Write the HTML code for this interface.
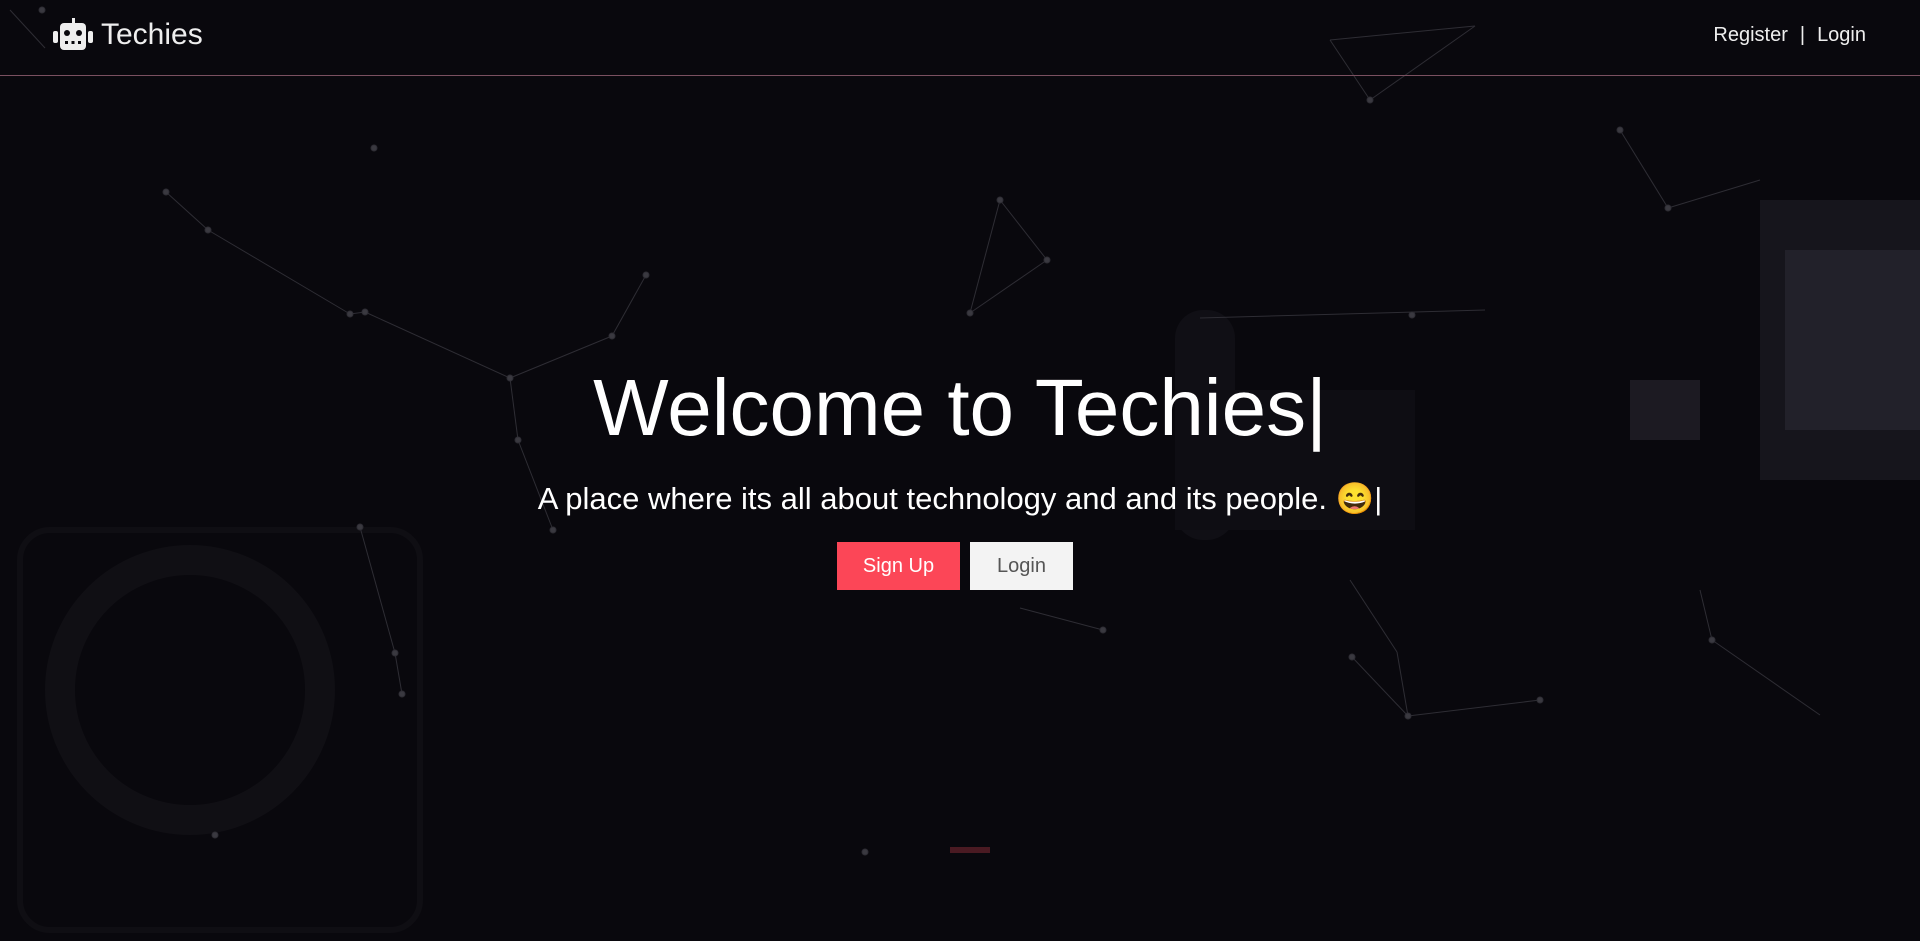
<!DOCTYPE html>
<html><head><meta charset="utf-8"><style>
html,body{margin:0;padding:0;width:1920px;height:941px;overflow:hidden;background:#09080d;font-family:"Liberation Sans",sans-serif;color:#fff}
.bg{position:absolute;inset:0}
header{position:absolute;left:0;top:0;width:1920px;height:75px;border-bottom:1px solid #7a5060}
.logo{position:absolute;left:53px;top:18px;display:flex;align-items:center;font-size:30px;color:#eee}
.logo svg{margin-right:8px}
.nav{position:absolute;right:54px;top:24px;font-size:20px;color:#eee}
.nav span{margin:0 12px}
h1{position:absolute;left:0;width:1920px;top:362px;margin:0;text-align:center;font-size:80px;font-weight:normal}
.sub{position:absolute;left:0;width:1920px;top:480px;text-align:center;font-size:31px}
.btn{position:absolute;top:542px;height:48px;line-height:48px;text-align:center;font-size:20px}
</style></head><body>
<svg class="bg" width="1920" height="941">
<rect x="1760" y="200" width="160" height="280" fill="#1a1920" opacity=".8"/>
<rect x="1785" y="250" width="135" height="180" fill="#26242e" opacity=".8"/>
<rect x="1630" y="380" width="70" height="60" fill="#1c1a22"/>
<rect x="1175" y="310" width="60" height="230" rx="28" fill="#100f15"/>
<rect x="1175" y="390" width="240" height="140" fill="#0e0d13"/>
<circle cx="190" cy="690" r="130" fill="none" stroke="#100f14" stroke-width="30"/>
<rect x="20" y="530" width="400" height="400" rx="30" fill="none" stroke="#0f0e13" stroke-width="6"/>
<g stroke="#2e2d34" stroke-width="1" fill="#3a3940">
<line x1="166" y1="192" x2="208" y2="230"/><line x1="208" y1="230" x2="350" y2="314"/>
<line x1="350" y1="314" x2="365" y2="312"/><line x1="365" y1="312" x2="510" y2="378"/>
<line x1="510" y1="378" x2="612" y2="336"/><line x1="612" y1="336" x2="646" y2="275"/>
<line x1="510" y1="378" x2="518" y2="440"/><line x1="518" y1="440" x2="553" y2="530"/>
<line x1="360" y1="527" x2="395" y2="653"/><line x1="395" y1="653" x2="402" y2="694"/>
<line x1="1000" y1="200" x2="1047" y2="260"/><line x1="1000" y1="200" x2="970" y2="313"/><line x1="970" y1="313" x2="1047" y2="260"/>
<line x1="1330" y1="40" x2="1370" y2="100"/><line x1="1370" y1="100" x2="1475" y2="26"/><line x1="1330" y1="40" x2="1475" y2="26"/>
<line x1="1620" y1="130" x2="1668" y2="208"/><line x1="1668" y1="208" x2="1760" y2="180"/>
<line x1="1350" y1="580" x2="1397" y2="652"/><line x1="1352" y1="657" x2="1408" y2="716"/><line x1="1397" y1="652" x2="1408" y2="716"/>
<line x1="1408" y1="716" x2="1540" y2="700"/><line x1="1700" y1="590" x2="1712" y2="640"/><line x1="1712" y1="640" x2="1820" y2="715"/>
<line x1="1020" y1="608" x2="1103" y2="630"/><line x1="1200" y1="318" x2="1485" y2="310"/>
<circle cx="166" cy="192" r="3"/><circle cx="208" cy="230" r="3"/><circle cx="350" cy="314" r="3"/><circle cx="365" cy="312" r="3"/>
<circle cx="510" cy="378" r="3"/><circle cx="612" cy="336" r="3"/><circle cx="646" cy="275" r="3"/><circle cx="518" cy="440" r="3"/>
<circle cx="553" cy="530" r="3"/><circle cx="360" cy="527" r="3"/><circle cx="395" cy="653" r="3"/><circle cx="402" cy="694" r="3"/>
<circle cx="374" cy="148" r="3"/><circle cx="1000" cy="200" r="3"/><circle cx="1047" cy="260" r="3"/><circle cx="970" cy="313" r="3"/>
<circle cx="1370" cy="100" r="3"/><circle cx="1620" cy="130" r="3"/><circle cx="1668" cy="208" r="3"/><circle cx="1412" cy="315" r="3"/>
<circle cx="1352" cy="657" r="3"/><circle cx="1408" cy="716" r="3"/><circle cx="1540" cy="700" r="3"/><circle cx="1712" cy="640" r="3"/>
<circle cx="1103" cy="630" r="3"/><circle cx="215" cy="835" r="3"/><circle cx="865" cy="852" r="3"/><circle cx="42" cy="10" r="3"/>
</g>
<line x1="10" y1="10" x2="45" y2="48" stroke="#2e2d34"/>
<rect x="950" y="847" width="40" height="6" fill="#4a1a22"/>
</svg>
<header>
<div class="logo"><svg width="40" height="34" viewBox="0 0 40 34"><rect x="19" y="0" width="3" height="6" fill="#eee"/><rect x="7" y="5" width="26" height="27" rx="4" fill="#eee"/><rect x="0" y="13" width="5" height="12" rx="2" fill="#eee"/><rect x="35" y="13" width="5" height="12" rx="2" fill="#eee"/><circle cx="14" cy="15" r="3" fill="#09080d"/><circle cx="26" cy="15" r="3" fill="#09080d"/><rect x="12" y="23" width="3" height="3" fill="#09080d"/><rect x="18.5" y="23" width="3" height="3" fill="#09080d"/><rect x="25" y="23" width="3" height="3" fill="#09080d"/></svg>Techies</div>
<div class="nav">Register<span>|</span>Login</div>
</header>
<h1>Welcome to Techies|</h1>
<div class="sub">A place where its all about technology and and its people. 😄|</div>
<div class="btn" style="left:837px;width:123px;background:#fc4657;color:#fff">Sign Up</div>
<div class="btn" style="left:970px;width:103px;background:#f3f3f3;color:#555">Login</div>
</body></html>
